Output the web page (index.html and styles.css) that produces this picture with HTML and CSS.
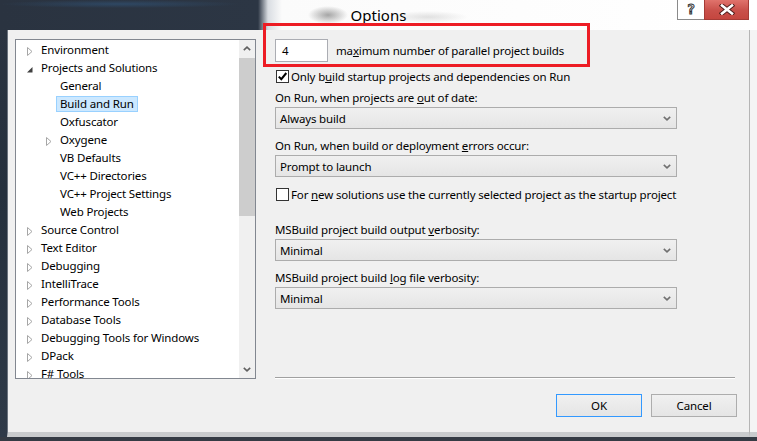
FILE: index.html
```html
<!DOCTYPE html>
<html lang="en">
<head>
<meta charset="utf-8">
<title>Options</title>
<link rel="stylesheet" href="styles.css">
</head>
<body>
<div class="window">
  <div class="titlebar">
    <div class="tb-side"></div>
    <div class="tb-title">Options</div>
    <div class="tb-buttons">
      <div class="tb-help">?</div>
      <div class="tb-close">
        <svg width="16" height="11" viewBox="0 0 16 11"><path d="M3 1.5 L13 9.5 M13 1.5 L3 9.5" stroke="#4a1a18" stroke-width="4.4" stroke-linecap="square"/><path d="M3 1.5 L13 9.5 M13 1.5 L3 9.5" stroke="#fff" stroke-width="2.6" stroke-linecap="square"/></svg>
      </div>
    </div>
  </div>
  <div class="middle">
    <div class="lframe"></div>
    <div class="client">
      <div class="main">
        <div class="tree">
          <div class="tree-items">
            <div class="row"><span class="arr"><svg width="6" height="9" viewBox="0 0 6 9"><path d="M0.5 0.5 L5 4.5 L0.5 8.5 Z" fill="#fff" stroke="#a6a6a6"/></svg></span><span class="lbl">Environment</span></div>
            <div class="row"><span class="arr"><svg width="6" height="9" viewBox="0 0 6 9"><path d="M5.5 2 L5.5 7.5 L0 7.5 Z" fill="#404040"/></svg></span><span class="lbl">Projects and Solutions</span></div>
            <div class="row l1"><span class="arr"></span><span class="lbl">General</span></div>
            <div class="row l1"><span class="arr"></span><span class="lbl sel">Build and Run</span></div>
            <div class="row l1"><span class="arr"></span><span class="lbl">Oxfuscator</span></div>
            <div class="row l1"><span class="arr"><svg width="6" height="9" viewBox="0 0 6 9"><path d="M0.5 0.5 L5 4.5 L0.5 8.5 Z" fill="#fff" stroke="#a6a6a6"/></svg></span><span class="lbl">Oxygene</span></div>
            <div class="row l1"><span class="arr"></span><span class="lbl">VB Defaults</span></div>
            <div class="row l1"><span class="arr"></span><span class="lbl">VC++ Directories</span></div>
            <div class="row l1"><span class="arr"></span><span class="lbl">VC++ Project Settings</span></div>
            <div class="row l1"><span class="arr"></span><span class="lbl">Web Projects</span></div>
            <div class="row"><span class="arr"><svg width="6" height="9" viewBox="0 0 6 9"><path d="M0.5 0.5 L5 4.5 L0.5 8.5 Z" fill="#fff" stroke="#a6a6a6"/></svg></span><span class="lbl">Source Control</span></div>
            <div class="row"><span class="arr"><svg width="6" height="9" viewBox="0 0 6 9"><path d="M0.5 0.5 L5 4.5 L0.5 8.5 Z" fill="#fff" stroke="#a6a6a6"/></svg></span><span class="lbl">Text Editor</span></div>
            <div class="row"><span class="arr"><svg width="6" height="9" viewBox="0 0 6 9"><path d="M0.5 0.5 L5 4.5 L0.5 8.5 Z" fill="#fff" stroke="#a6a6a6"/></svg></span><span class="lbl">Debugging</span></div>
            <div class="row"><span class="arr"><svg width="6" height="9" viewBox="0 0 6 9"><path d="M0.5 0.5 L5 4.5 L0.5 8.5 Z" fill="#fff" stroke="#a6a6a6"/></svg></span><span class="lbl">IntelliTrace</span></div>
            <div class="row"><span class="arr"><svg width="6" height="9" viewBox="0 0 6 9"><path d="M0.5 0.5 L5 4.5 L0.5 8.5 Z" fill="#fff" stroke="#a6a6a6"/></svg></span><span class="lbl">Performance Tools</span></div>
            <div class="row"><span class="arr"><svg width="6" height="9" viewBox="0 0 6 9"><path d="M0.5 0.5 L5 4.5 L0.5 8.5 Z" fill="#fff" stroke="#a6a6a6"/></svg></span><span class="lbl">Database Tools</span></div>
            <div class="row"><span class="arr"><svg width="6" height="9" viewBox="0 0 6 9"><path d="M0.5 0.5 L5 4.5 L0.5 8.5 Z" fill="#fff" stroke="#a6a6a6"/></svg></span><span class="lbl">Debugging Tools for Windows</span></div>
            <div class="row"><span class="arr"><svg width="6" height="9" viewBox="0 0 6 9"><path d="M0.5 0.5 L5 4.5 L0.5 8.5 Z" fill="#fff" stroke="#a6a6a6"/></svg></span><span class="lbl">DPack</span></div>
            <div class="row"><span class="arr"><svg width="6" height="9" viewBox="0 0 6 9"><path d="M0.5 0.5 L5 4.5 L0.5 8.5 Z" fill="#fff" stroke="#a6a6a6"/></svg></span><span class="lbl">F# Tools</span></div>
          </div>
          <div class="vscroll">
            <div class="sb-btn"><svg width="8" height="5" viewBox="0 0 8 5"><path d="M0.8 4.2 L4 1.2 L7.2 4.2" fill="none" stroke="#606060" stroke-width="1.6"/></svg></div>
            <div class="sb-thumb"></div>
            <div class="sb-track"></div>
            <div class="sb-btn"><svg width="8" height="5" viewBox="0 0 8 5"><path d="M0.8 0.8 L4 3.8 L7.2 0.8" fill="none" stroke="#606060" stroke-width="1.6"/></svg></div>
          </div>
        </div>
        <div class="panel">
          <div class="num-row">
            <div class="num-input">4</div>
            <span class="num-label">ma<u>x</u>imum number of parallel project builds</span>
          </div>
          <div class="check-row">
            <span class="checkbox"><svg width="11" height="11" viewBox="0 0 11 11"><path d="M1.8 5.6 L4.3 8.2 L9.3 2" fill="none" stroke="#000" stroke-width="2"/></svg></span>
            <span class="check-label">Only b<u>u</u>ild startup projects and dependencies on Run</span>
          </div>
          <div class="field-label">On Run, when projects are <u>o</u>ut of date:</div>
          <div class="combo"><span>Always build</span><svg width="8" height="5" viewBox="0 0 8 5"><path d="M0.8 0.8 L4 3.8 L7.2 0.8" fill="none" stroke="#707070" stroke-width="1.6"/></svg></div>
          <div class="field-label">On Run, when build or deployment <u>e</u>rrors occur:</div>
          <div class="combo"><span>Prompt to launch</span><svg width="8" height="5" viewBox="0 0 8 5"><path d="M0.8 0.8 L4 3.8 L7.2 0.8" fill="none" stroke="#707070" stroke-width="1.6"/></svg></div>
          <div class="check-row check-row2">
            <span class="checkbox"></span>
            <span class="check-label">For <u>n</u>ew solutions use the currently selected project as the startup project</span>
          </div>
          <div class="field-label gap-big">MSBuild project build output <u>v</u>erbosity:</div>
          <div class="combo"><span>Minimal</span><svg width="8" height="5" viewBox="0 0 8 5"><path d="M0.8 0.8 L4 3.8 L7.2 0.8" fill="none" stroke="#707070" stroke-width="1.6"/></svg></div>
          <div class="field-label">MSBuild project build <u>l</u>og file verbosity:</div>
          <div class="combo"><span>Minimal</span><svg width="8" height="5" viewBox="0 0 8 5"><path d="M0.8 0.8 L4 3.8 L7.2 0.8" fill="none" stroke="#707070" stroke-width="1.6"/></svg></div>
          <div class="separator"></div>
        </div>
      </div>
      <div class="buttons">
        <div class="btn btn-default">OK</div>
        <div class="btn">Cancel</div>
      </div>
    </div>
    <div class="rframe"></div>
  </div>
  <div class="bframe"></div>
  <div class="highlight"></div>
</div>
</body>
</html>
```

FILE: styles.css
```css
* { box-sizing: border-box; }
html, body { margin: 0; padding: 0; }
body {
  width: 757px;
  height: 441px;
  overflow: hidden;
  background: #2b3441;
  font-family: "Noto Sans", "Open Sans", sans-serif;
  font-size: 11.5px;
  letter-spacing: -0.15px;
  color: #000;
}
.window {
  position: relative;
  width: 757px;
  height: 441px;
  display: flex;
  flex-direction: column;
}
.titlebar {
  height: 30px;
  flex: none;
  display: grid;
  grid-template-columns: 1fr auto 1fr;
  background:
    radial-gradient(ellipse 20px 9px at 328px 15px, rgba(80,80,80,0.5), rgba(80,80,80,0) 100%),
    radial-gradient(ellipse 40px 6px at 428px 17px, rgba(160,160,160,0.3), rgba(160,160,160,0) 100%),
    radial-gradient(ellipse 120px 4px at 120px 4px, rgba(50,95,140,0.45), rgba(50,95,140,0) 100%),
    linear-gradient(90deg, #2a3340 0, #2c3644 258px, #d9dde2 268px, #fbfbfb 282px, #fff 100%);
}
.tb-title {
  grid-column: 2;
  font-size: 15px;
  letter-spacing: 0;
  line-height: 30px;
  color: #000;
}
.tb-buttons {
  grid-column: 3;
  justify-self: end;
  display: flex;
  height: 20px;
  margin-right: 8px;
}
.tb-help {
  width: 27px;
  height: 20px;
  border: 1px solid #8a8a8a;
  border-top: none;
  border-right: none;
  background: #fff;
  font-family: "DejaVu Sans Mono", monospace;
  font-size: 14px;
  font-weight: bold;
  line-height: 18px;
  text-align: center;
  color: #fff;
  -webkit-text-stroke: 1px #333;
}
.tb-close {
  width: 45px;
  height: 20px;
  border: 1px solid #a53b36;
  border-top: none;
  background: linear-gradient(#e0736c, #c9504a 55%, #c4463f);
  display: flex;
  align-items: center;
  justify-content: center;
}
.middle {
  flex: 1;
  display: flex;
}
.lframe {
  width: 7px;
  background: linear-gradient(#2b3441, #25303d 40%, #2f3a48);
}
.client {
  width: 742px;
  background: #f0f0f0;
  border-left: 1px solid #6b737e;
  border-bottom: 5px solid #c9cbcd;
  padding: 9px 0 0 7px;
  display: flex;
  flex-direction: column;
}
.rframe {
  width: 8px;
  background: #f4f4f4;
  border-left: 1px solid #b5b5b5;
  border-bottom: 5px solid #c9cbcd;
}
.bframe {
  height: 4px;
  flex: none;
  background: #353b44;
}
.main {
  display: flex;
  height: 340px;
}
.tree {
  width: 241px;
  height: 340px;
  border: 1px solid #828790;
  background: #fff;
  display: flex;
}
.tree-items {
  flex: 1;
  overflow: hidden;
  padding-top: 1px;
}
.row {
  height: 18px;
  display: flex;
  align-items: center;
  white-space: nowrap;
}
.row.l1 { padding-left: 19px; }
.arr {
  width: 21px;
  flex: none;
  display: flex;
  align-items: center;
  padding-left: 11px;
  padding-top: 2px;
}
.lbl {
  line-height: 14px;
  padding: 0 3px;
  border: 1px solid transparent;
}
.lbl.sel {
  background: #cce8ff;
  border-color: #99d1ff;
}
.vscroll {
  width: 16px;
  flex: none;
  background: #f0f0f0;
  display: flex;
  flex-direction: column;
}
.sb-btn {
  height: 17px;
  display: flex;
  align-items: center;
  justify-content: center;
}
.sb-thumb {
  height: 158px;
  background: #cdcdcd;
  margin-top: 1px;
}
.sb-track { flex: 1; }
.panel {
  margin-left: 19px;
  width: 460px;
  display: flex;
  flex-direction: column;
}
.num-row {
  height: 23px;
  display: flex;
  align-items: center;
}
.num-input {
  width: 53px;
  height: 23px;
  border: 1px solid #abadb3;
  background: #fff;
  padding-left: 6px;
  line-height: 21px;
}
.num-label { margin-left: 8px; }
.check-row {
  height: 18px;
  margin-top: 5px;
  display: flex;
  align-items: center;
}
.check-row2 { margin-top: 8px; }
.checkbox {
  width: 13px;
  height: 13px;
  margin-left: 1px;
  border: 1px solid #333;
  background: #fff;
  display: flex;
  align-items: center;
  justify-content: center;
}
.check-label { margin-left: 2px; }
.field-label {
  height: 18px;
  line-height: 18px;
  margin-top: 4px;
}
.combo + .field-label { margin-top: 8px; }
.field-label.gap-big { margin-top: 18px; }
.combo {
  width: 402px;
  height: 22px;
  border: 1px solid #acacac;
  background: linear-gradient(#f0f0f0, #e5e5e5);
  padding: 0 5px 0 4px;
  display: flex;
  align-items: center;
  justify-content: space-between;
}
.separator {
  margin-top: auto;
  height: 2px;
  border-top: 1px solid #a0a0a0;
  border-bottom: 1px solid #fff;
}
.buttons {
  margin-top: 15px;
  padding-right: 12px;
  display: flex;
  justify-content: flex-end;
  gap: 9px;
}
.btn {
  width: 86px;
  height: 23px;
  border: 1px solid #adadad;
  background: linear-gradient(#f0f0f0, #e5e5e5);
  line-height: 21px;
  text-align: center;
}
.btn-default {
  border-color: #3399ff;
}
.highlight {
  position: absolute;
  left: 263px;
  top: 23px;
  width: 327px;
  height: 44px;
  border: 3px solid #ed1c24;
  pointer-events: none;
}
```
